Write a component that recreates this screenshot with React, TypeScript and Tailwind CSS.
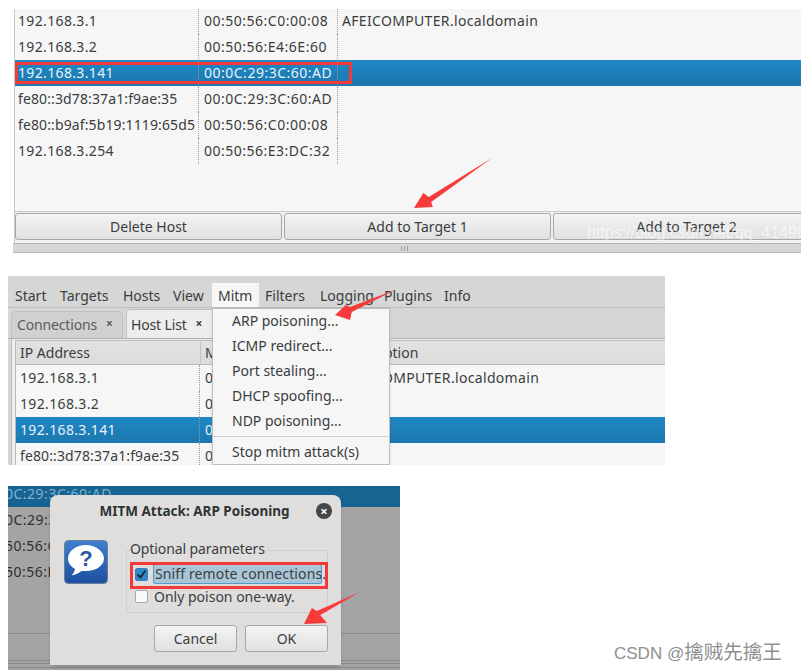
import React from "react";

const font = { fontFamily: '"Noto Sans", sans-serif' };

function Arrow({ className, points }: { className: string; points: string }) {
  return (
    <svg className={className} viewBox="0 0 100 100" preserveAspectRatio="none">
      <polygon points={points} fill="#f73a3a" />
    </svg>
  );
}

function Sep() {
  return <div className="h-[26px] w-0 shrink-0 border-l border-dotted border-[#9a9a9a]" />;
}

function Row1({ ip, mac, name, sel, ipClass = "tracking-[0.35px]" }: { ip: string; mac: string; name?: string; sel?: boolean; ipClass?: string }) {
  return (
    <div className={`flex h-[26px] items-center text-[14px] ${sel ? "bg-gradient-to-b from-[#1f88c5] to-[#1c77ae] text-[#e8f2f8]" : "text-[#3a3d3d]"}`}>
      <div className={`w-[183px] shrink-0 pb-[2px] pl-[3px] whitespace-nowrap ${ipClass}`}>{ip}</div>
      <Sep />
      <div className="w-[138px] shrink-0 pb-[2px] pl-[5px] tracking-[0.5px] whitespace-nowrap">{mac}</div>
      <Sep />
      <div className="pb-[2px] pl-[4px] tracking-[0.33px] whitespace-nowrap">{name}</div>
    </div>
  );
}

function Btn({ children, className = "" }: { children: React.ReactNode; className?: string }) {
  return (
    <div className={`flex shrink-0 items-center justify-center rounded-[3px] border border-[#a8a8a8] bg-gradient-to-b from-[#f4f4f4] to-[#e0e0e0] text-[#3a3d3d] ${className}`}>
      {children}
    </div>
  );
}

function Row2({ ip, sel, desc, ipClass = "tracking-[0.35px]" }: { ip: string; sel?: boolean; desc?: string; ipClass?: string }) {
  return (
    <div className={`flex h-[26px] items-center text-[14px] ${sel ? "bg-gradient-to-b from-[#1f88c5] to-[#1c77ae] text-[#e8f2f8]" : "text-[#3a3d3d]"}`}>
      <div className={`w-[183px] shrink-0 pb-[2px] pl-[4px] whitespace-nowrap ${ipClass}`}>{ip}</div>
      <Sep />
      <div className="w-[143px] shrink-0 pb-[2px] pl-[5px]">0</div>
      <div className="pb-[2px] tracking-[0.33px] whitespace-nowrap">{desc}</div>
    </div>
  );
}

function MenuItem({ children }: { children: React.ReactNode }) {
  return <div className="flex h-[25px] items-center pb-[2px] pl-[19px] whitespace-nowrap">{children}</div>;
}

function Panel1() {
  return (
    <div className="ml-[13px] mt-[9px] h-[244px] w-[788px] overflow-hidden">
      <div className="ml-[1px] h-[202px] overflow-hidden border-l border-[#c8c8c8] bg-[#f6f6f6]">
        <div className="-mt-[1px]">
          <Row1 ip="192.168.3.1" mac="00:50:56:C0:00:08" name="AFEICOMPUTER.localdomain" />
          <Row1 ip="192.168.3.2" mac="00:50:56:E4:6E:60" />
          <Row1 ip="192.168.3.141" mac="00:0C:29:3C:60:AD" sel />
          <Row1 ip="fe80::3d78:37a1:f9ae:35" mac="00:0C:29:3C:60:AD" ipClass="tracking-[0.12px]" />
          <Row1 ip="fe80::b9af:5b19:1119:65d5" mac="00:50:56:C0:00:08" ipClass="tracking-[0.12px]" />
          <Row1 ip="192.168.3.254" mac="00:50:56:E3:DC:32" />
        </div>
      </div>
      <div className="ml-[1px] flex h-[32px] gap-[2px] border-l border-t border-[#c8c8c8] bg-[#f0f0f0] pt-[1px] text-[14px]">
        <Btn className="h-[27px] w-[267px]">Delete Host</Btn>
        <Btn className="h-[27px] w-[267px]">Add to Target 1</Btn>
        <Btn className="h-[27px] w-[267px]">Add to Target 2</Btn>
      </div>
      <div className="flex h-[10px] items-center justify-center border-t border-b border-[#b8b8b8] bg-[#d6d6d6] pr-[6px]">
        <span className="h-[5px] w-px bg-[#a0a0a0]" />
        <span className="ml-[2px] h-[5px] w-px bg-[#a0a0a0]" />
        <span className="ml-[2px] h-[5px] w-px bg-[#a0a0a0]" />
      </div>
    </div>
  );
}

function Panel2() {
  const menus = [
    { t: "Start", c: "w-[52px] pl-[7px]" },
    { t: "Targets", c: "w-[63px]" },
    { t: "Hosts", c: "w-[50px]" },
    { t: "View", c: "w-[39px]" },
    { t: "Mitm", c: "w-[47px] pl-[6px] bg-[#f6f6f6]" },
    { t: "Filters", c: "w-[61px] pl-[6px]" },
    { t: "Logging", c: "w-[64px]" },
    { t: "Plugins", c: "w-[60px]" },
    { t: "Info", c: "w-[40px]" },
  ];
  return (
    <div className="relative ml-[8px] mt-[23px] h-[189px] w-[657px] overflow-hidden bg-[#d6d6d6] text-[#3a3d3d]">
      <div className="flex h-[32px] items-start border-b border-[#bdbdbd] pt-[7px] text-[14px]">
        {menus.map((m) => (
          <div key={m.t} className={`flex h-[24px] items-center whitespace-nowrap ${m.c}`}>
            {m.t}
          </div>
        ))}
      </div>
      <div className="flex h-[31px] items-end gap-[3px] border-b border-[#b0b0b0] pl-[3px] text-[14px] tracking-[-0.15px]">
        <div className="flex h-[27px] w-[112px] items-center gap-[9px] rounded-t-[5px] border border-b-0 border-[#c0c0c0] bg-[#d0d0d0] pb-[2px] pl-[5px] text-[#5a5d5d]">
          Connections <span className="text-[12px] font-bold">×</span>
        </div>
        <div className="flex h-[29px] w-[90px] items-center gap-[9px] rounded-t-[5px] border border-b-0 border-[#c0c0c0] bg-[#ededed] pl-[4px]">
          Host List <span className="text-[12px] font-bold">×</span>
        </div>
      </div>
      <div className="ml-[3px] h-[130px] border-l border-[#bcbcbc] bg-[#ededed] pl-[3px] pt-[1px]">
        <div className="border-l border-t border-[#bcbcbc]">
          <div className="flex h-[24px] items-center border-b border-[#b8b8b8] bg-gradient-to-b from-[#e2e2e2] to-[#dcdcdc] pl-[4px] text-[14px]">
            <div className="w-[180px] shrink-0">IP Address</div>
            <div className="w-[143px] shrink-0 border-l border-[#c4c4c4] pl-[4px]">M</div>
            <div className="whitespace-nowrap">Description</div>
          </div>
          <div className="bg-[#f6f6f6]">
            <Row2 ip="192.168.3.1" desc="AFEICOMPUTER.localdomain" />
            <Row2 ip="192.168.3.2" />
            <Row2 ip="192.168.3.141" sel />
            <Row2 ip="fe80::3d78:37a1:f9ae:35" ipClass="tracking-[0.12px]" />
          </div>
        </div>
      </div>
      <div className="absolute left-[204px] top-[32px] h-[157px] w-[178px] border border-[#bdbdbd] bg-[#f6f6f6] text-[14px] shadow-sm">
        <MenuItem>ARP poisoning...</MenuItem>
        <MenuItem>ICMP redirect...</MenuItem>
        <MenuItem>Port stealing...</MenuItem>
        <MenuItem>DHCP spoofing...</MenuItem>
        <MenuItem>NDP poisoning...</MenuItem>
        <div className="mt-[2px] h-px bg-[#d2d2d2]" />
        <div className="flex h-[30px] items-center pb-[2px] pl-[19px]">Stop mitm attack(s)</div>
      </div>
    </div>
  );
}

function Panel3() {
  return (
    <div className="relative ml-[8px] mt-[21px] h-[184px] w-[392px] overflow-hidden bg-[#a4a4a4] text-[14px] tracking-[0.5px] text-[#3a3d3d]">
      <div className="h-[21px] bg-[#176391] leading-[15px] text-[#7fb2cf] whitespace-nowrap -indent-[3px]">0C:29:3C:60:AD</div>
      <div className="flex h-[26px] items-center pb-[2px] text-[#2e3030] whitespace-nowrap -ml-[3px]">0C:29:3C:60:AD</div>
      <div className="flex h-[26px] items-center pb-[2px] text-[#2e3030] whitespace-nowrap -ml-[3px]">50:56:C0:00:08</div>
      <div className="flex h-[26px] items-center pb-[2px] text-[#2e3030] whitespace-nowrap -ml-[3px]">50:56:E3:DC:32</div>
      <div className="mt-[48px] h-[28px] border-y border-[#8a8a8a]" />
      <div className="mt-[2px] h-[5px] border-y border-[#8a8a8a]" />

      <div className="absolute left-[42px] top-[9px] h-[170px] w-[291px] rounded-t-[8px] bg-[#dfdedd] tracking-normal shadow-md">
        <div className="relative flex h-[32px] items-center justify-center pr-[2px] text-[13.5px] font-bold text-[#2e3436]">
          MITM Attack: ARP Poisoning
          <div className="absolute right-[9px] top-[8px] flex h-[16px] w-[16px] items-center justify-center rounded-full bg-[#45484a] text-[13px] leading-none text-white">×</div>
        </div>
        <div className="flex pl-[14px] pt-[13px]">
          <svg width="44" height="44" viewBox="0 0 44 44" className="shrink-0">
            <defs>
              <linearGradient id="q" x1="0" y1="0" x2="0" y2="1">
                <stop offset="0" stopColor="#3f7fd0" />
                <stop offset="1" stopColor="#1c4f9e" />
              </linearGradient>
            </defs>
            <rect x="0.5" y="0.5" width="43" height="43" rx="4" fill="url(#q)" stroke="#6a7f9a" />
            <path d="M22 5c-10 0-18 6-18 13.500 0 4.500 3 8.200 7 10.500-.4 3-2 5-3.500 6.500 4-.6 7.500-2.500 10-4.500h4.500c10 0 18-5.500 18-12.500S32 5 22 5z" fill="#fff" />
            <text x="22" y="26" textAnchor="middle" fontSize="22" fontWeight="bold" fill="#2a5aa5" style={{ fontFamily: '"Liberation Sans", sans-serif' }}>?</text>
          </svg>
          <div className="ml-[18px]">
            <div className="relative mt-[10px] h-[63px] w-[202px] rounded-[2px] border border-[#cfcfcf]">
              <div className="absolute -top-[12px] left-[3px] bg-[#dfdedd] pr-[1px] leading-[20px] tracking-[-0.1px]">Optional parameters</div>
              <div className="ml-[8px] mt-[12px] flex h-[22px] items-center gap-[5px]">
                <div className="flex h-[13px] w-[13px] shrink-0 items-center justify-center rounded-[2px] border border-[#3a7fb5] bg-[#2f8ccb]">
                  <svg width="11" height="11" viewBox="0 0 11 11"><path d="M1.500 5.500 4.500 8.500 9.500 1.500" fill="none" stroke="#1d2a33" strokeWidth="2" /></svg>
                </div>
                <div className="flex h-[20px] w-[169px] items-center rounded-[2px] border border-[#4d9ccf] bg-[#a9c6d8] pb-[1px] pl-[1px] tracking-[0.12px] whitespace-nowrap">Sniff remote connections.</div>
              </div>
              <div className="ml-[8px] flex h-[24px] items-center gap-[6px] pb-[1px] whitespace-nowrap">
                <div className="h-[13px] w-[13px] shrink-0 rounded-[2px] border border-[#a8a8a8] bg-[#fafafa]" />
                Only poison one-way.
              </div>
            </div>
            <div className="ml-[28px] mt-[12px] flex gap-[8px]">
              <Btn className="h-[27px] w-[83px] border-[#a4a4a4]">Cancel</Btn>
              <Btn className="h-[27px] w-[83px] border-[#a4a4a4]">OK</Btn>
            </div>
          </div>
        </div>
      </div>
    </div>
  );
}

export default function App() {
  return (
    <div className="relative h-[671px] w-[801px] overflow-hidden bg-white" style={font}>
      <Panel1 />
      <Panel2 />
      <Panel3 />

      <div className="pointer-events-none absolute left-[15px] top-[62px] h-[22px] w-[337px] border-[3px] border-[#f33a3a]" />
      <div className="pointer-events-none absolute left-[130px] top-[562px] h-[27px] w-[198px] border-[3px] border-[#f33a3a]" />

      <Arrow className="pointer-events-none absolute left-[414px] top-[158px] h-[50px] w-[78px]" points="100,0 22,88 24,98 0,100 12,70 19,78" />
      <Arrow className="pointer-events-none absolute left-[335px] top-[290px] h-[30px] w-[60px]" points="100,0 28,73 25,100 0,83 18,50 25,57" />
      <Arrow className="pointer-events-none absolute left-[304px] top-[592px] h-[32px] w-[56px]" points="100,0 29,72 41,97 0,100 14,50 23,59" />

      <div className="pointer-events-none absolute left-[587px] top-[223px] text-[16px] leading-[20px] whitespace-nowrap text-white/60" style={{ fontFamily: '"Liberation Sans", sans-serif' }}>
        https://blog.csdn.net/qq_41490
      </div>
      <div className="pointer-events-none absolute left-[614px] top-[641px] text-[17px] leading-[22px] whitespace-nowrap text-[#8f8f8f]" style={{ fontFamily: '"Liberation Sans", "Noto Sans CJK SC", sans-serif' }}>
        CSDN @<span className="text-[19.5px]">擒贼先擒王</span>
      </div>
    </div>
  );
}
